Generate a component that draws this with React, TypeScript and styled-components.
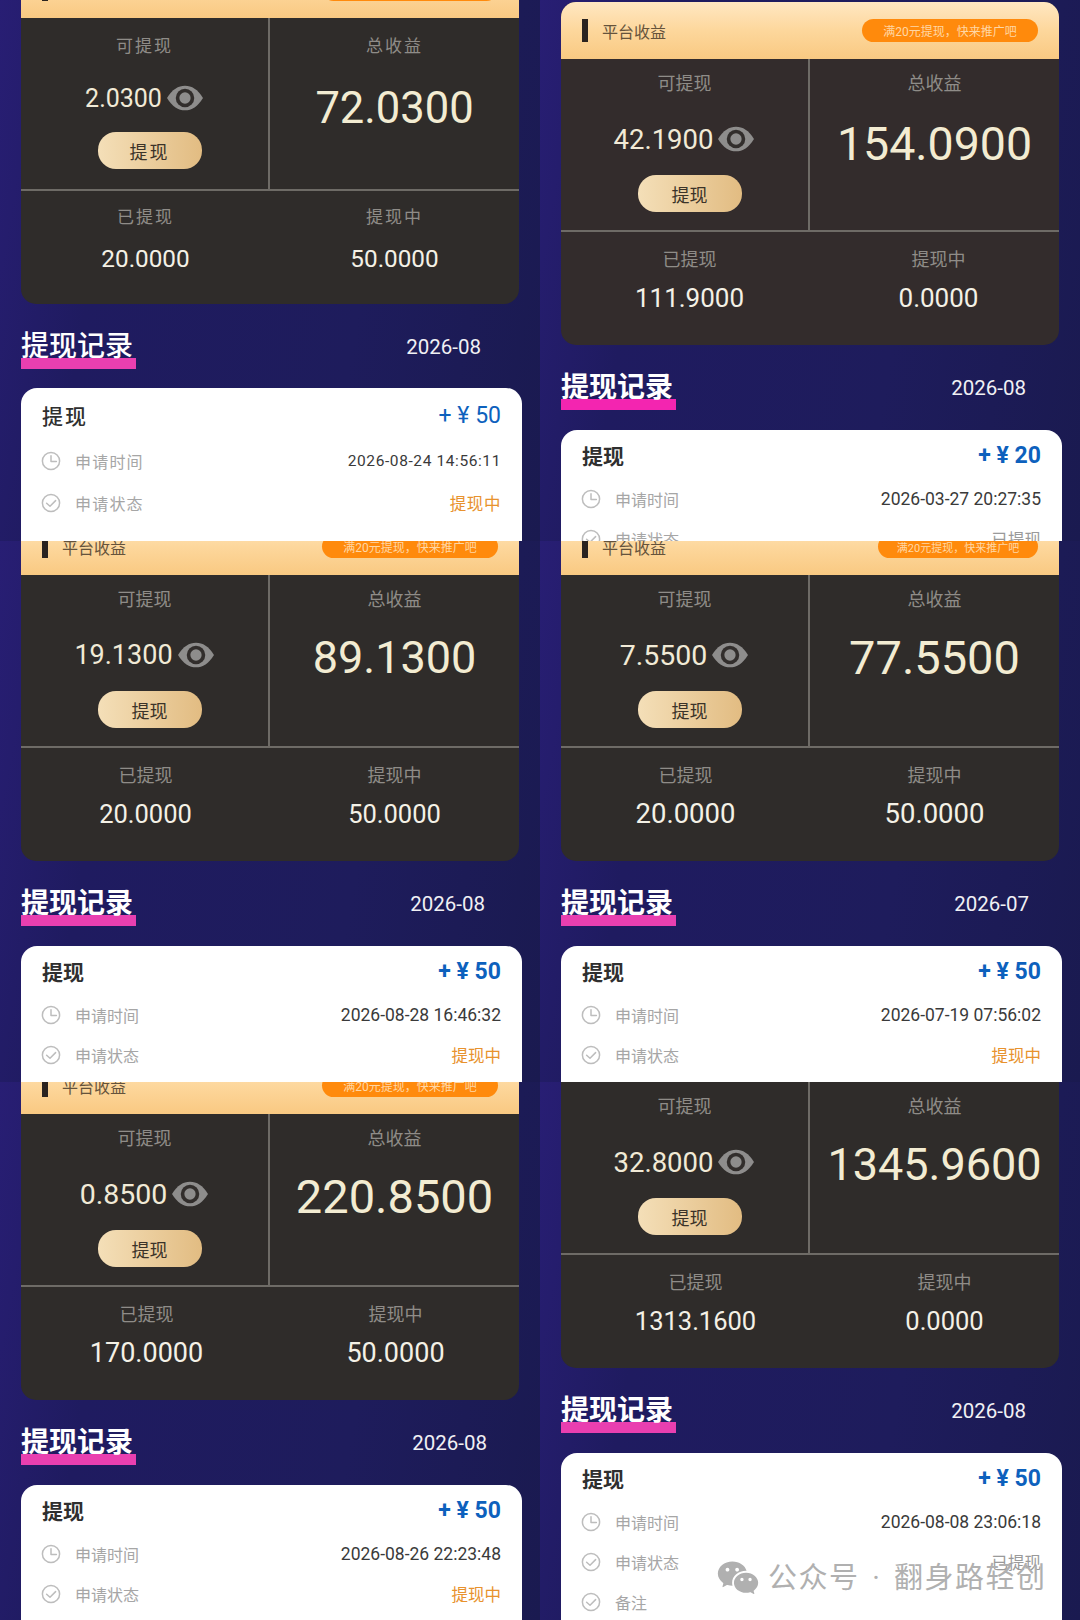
import React from "react";
import styled, { createGlobalStyle } from "styled-components";
import { RiWechatFill } from "react-icons/ri";

const Global = createGlobalStyle`
  html, body { margin: 0; padding: 0; background: #1d1b58; }
  * { box-sizing: border-box; }
  body { font-family: Roboto, "Noto Sans CJK SC", sans-serif; }
`;

const Page = styled.div`
  position: relative;
  width: 1080px;
  height: 1620px;
  overflow: hidden;
  display: grid;
  grid-template-columns: 540px 540px;
  grid-template-rows: 541px 541px 538px;
`;

const Tile = styled.section`
  overflow: hidden;
  background: linear-gradient(100deg, #281e74 0%, #1f1b60 22%, #1e1c5c 65%, #1a1a50 100%);
`;

const Screen = styled.div<{ $top: number }>`
  margin-top: ${(p) => p.$top}px;
`;

const Panel = styled.div<{ $warm?: boolean }>`
  margin: 0 21px;
  width: 498px;
  border-radius: 15px;
  overflow: hidden;
  background: ${(p) => (p.$warm ? "#332c2c" : "#2f2c2a")};
`;

const PanelHead = styled.header`
  height: 57px;
  padding: 0 21px;
  display: flex;
  align-items: center;
  background: linear-gradient(180deg, #ffe7c2 0%, #fdd79c 50%, #f9c982 100%);
`;

const Bar = styled.i`
  width: 6px;
  height: 23px;
  background: #2a2320;
`;

const PanelTitle = styled.span`
  margin-left: 14px;
  font-size: 16px;
  color: #65533c;
`;

const Pill = styled.span<{ $narrow?: boolean }>`
  margin-left: auto;
  width: ${(p) => (p.$narrow ? 160 : 176)}px;
  height: 23px;
  border-radius: 12px;
  background: #ff8a0c;
  color: #ffd7a5;
  font-size: ${(p) => (p.$narrow ? 11 : 12)}px;
  white-space: nowrap;
  display: flex;
  align-items: center;
  justify-content: center;
`;

const TopRow = styled.div`
  display: grid;
  grid-template-columns: 249px 249px;
  height: 173px;
  border-bottom: 2px solid #6e6b66;
`;

const TopCell = styled.div<{ $right?: boolean; $loose?: boolean }>`
  padding-top: ${(p) => (p.$loose ? 17 : 14)}px;
  display: flex;
  flex-direction: column;
  align-items: center;
  ${(p) => (p.$right ? "" : "border-right: 2px solid #6e6b66;")}
`;

const Label = styled.div<{ $wide?: boolean }>`
  height: 22px;
  line-height: 22px;
  font-size: ${(p) => (p.$wide ? 17 : 18)}px;
  letter-spacing: ${(p) => (p.$wide ? 2 : 0)}px;
  color: #8f8c88;
`;

const ValueLine = styled.div<{ $loose?: boolean }>`
  margin-top: ${(p) => (p.$loose ? 21 : 24)}px;
  height: 40px;
  display: flex;
  align-items: center;
  gap: 4px;
`;

const Value = styled.span<{ $size: number }>`
  font-size: ${(p) => p.$size}px;
  color: #f1ead6;
`;

const Withdraw = styled.div<{ $wide?: boolean }>`
  margin: ${(p) => (p.$wide ? 14 : 16)}px 0 0 10px;
  width: 104px;
  height: 37px;
  border-radius: 18px;
  background: linear-gradient(90deg, #f4dfb8 0%, #e2bc82 100%);
  color: #3b3329;
  font-size: 18px;
  letter-spacing: ${(p) => (p.$wide ? 2 : 0)}px;
  display: flex;
  align-items: center;
  justify-content: center;
`;

const BigValue = styled.div<{ $size: number; $gap: number }>`
  margin-top: ${(p) => p.$gap}px;
  height: 56px;
  line-height: 56px;
  font-size: ${(p) => p.$size}px;
  color: #f3ecd2;
`;

const BottomRow = styled.div<{ $shift: number }>`
  display: grid;
  grid-template-columns: 249px 249px;
  height: 113px;
  padding-left: ${(p) => p.$shift}px;
`;

const BottomCell = styled.div<{ $loose?: boolean }>`
  padding-top: ${(p) => (p.$loose ? 15 : 17)}px;
  display: flex;
  flex-direction: column;
  align-items: center;
`;

const BottomValue = styled.div<{ $size: number; $loose?: boolean }>`
  margin-top: ${(p) => (p.$loose ? 11 : 7)}px;
  height: 40px;
  line-height: 40px;
  font-size: ${(p) => p.$size}px;
  color: #f4f1e6;
`;

const Heading = styled.div<{ $loose?: boolean; $end: number }>`
  margin: 26px ${(p) => p.$end}px ${(p) => (p.$loose ? 19 : 20)}px 21px;
  display: flex;
  align-items: flex-start;
  justify-content: space-between;
`;

const HeadingText = styled.h2<{ $light?: boolean; $pink: string }>`
  margin: 0;
  width: 115px;
  height: 39px;
  line-height: 34px;
  font-size: 28px;
  font-weight: ${(p) => (p.$light ? 500 : 700)};
  color: #fff;
  white-space: nowrap;
  background: linear-gradient(${(p) => p.$pink}, ${(p) => p.$pink}) bottom / 100% 11px no-repeat;
`;

const Month = styled.span<{ $size: number }>`
  line-height: 34px;
  font-size: ${(p) => p.$size}px;
  color: #f0f0f4;
`;

const Record = styled.div<{ $loose?: boolean }>`
  margin: 0 18px 0 21px;
  padding: ${(p) => (p.$loose ? 11 : 9)}px 21px 0;
  min-height: 220px;
  border-radius: 16px;
  background: #fff;
`;

const RecordHead = styled.div<{ $loose?: boolean }>`
  height: 32px;
  display: flex;
  align-items: center;
  justify-content: space-between;
  margin-bottom: ${(p) => (p.$loose ? 9 : 8)}px;
`;

const RecordTitle = styled.span<{ $light?: boolean }>`
  font-size: 21px;
  font-weight: ${(p) => (p.$light ? 500 : 700)};
  letter-spacing: ${(p) => (p.$light ? 2 : 0)}px;
  color: #2f2f2f;
`;

const Amount = styled.span<{ $light?: boolean }>`
  font-size: 23px;
  font-weight: ${(p) => (p.$light ? 400 : 700)};
  color: #0d61bd;
`;

const Row = styled.div<{ $loose?: boolean }>`
  height: ${(p) => (p.$loose ? 42 : 40)}px;
  display: flex;
  align-items: center;
`;

const RowIcon = styled.svg`
  width: 20px;
  height: 20px;
  margin-left: -1px;
  flex: none;
  fill: none;
  stroke: #bdbdbd;
  stroke-width: 1.5;
  stroke-linecap: round;
  stroke-linejoin: round;
`;

const RowLabel = styled.span<{ $wide?: boolean }>`
  margin-left: 14px;
  font-size: 16px;
  letter-spacing: ${(p) => (p.$wide ? 1.2 : 0)}px;
  color: #a6a6a6;
`;

const RowValue = styled.span<{ $tone: string; $size: number; $wide?: boolean }>`
  margin-left: auto;
  font-size: ${(p) => p.$size}px;
  letter-spacing: ${(p) => (p.$wide ? 0.6 : 0)}px;
  color: ${(p) => p.$tone};
`;

const Watermark = styled.div`
  position: absolute;
  left: 716px;
  top: 1556px;
  display: flex;
  align-items: center;
  gap: 8px;
  color: #b0b0b0;
  font-size: 29px;
  letter-spacing: 1.5px;
  word-spacing: 4px;
  line-height: 42px;
  white-space: nowrap;
`;

const EyeSvg = styled.svg`
  width: 38px;
  height: 28px;
  flex: none;
`;

const Eye = () => (
  <EyeSvg viewBox="0 0 37 27">
    <path d="M1 13.5C6 5 12 1.5 18.5 1.5S31 5 36 13.5C31 22 25 25.5 18.5 25.5S6 22 1 13.5Z" fill="#8e8d8c" />
    <circle cx="18.5" cy="13.5" r="9" fill="#322e2c" />
    <circle cx="18.5" cy="13.5" r="5.5" fill="#8e8d8c" />
  </EyeSvg>
);

const Clock = () => (
  <RowIcon viewBox="0 0 20 20">
    <circle cx="10" cy="10" r="8.6" />
    <path d="M10 4.8V10.6H15.4" />
  </RowIcon>
);

const Check = () => (
  <RowIcon viewBox="0 0 20 20">
    <circle cx="10" cy="10" r="8.6" />
    <path d="M5.6 10.2L9 13.2L14.6 7.6" />
  </RowIcon>
);

type Data = {
  top: number;
  avail: string;
  availSize: number;
  total: string;
  totalSize: number;
  totalGap?: number;
  paid: string;
  pending: string;
  paidSize: number;
  shift?: number;
  month: string;
  end: number;
  amount: string;
  time: string;
  status: string;
  statusTone: string;
  note?: boolean;
  loose?: boolean;
  narrowPill?: boolean;
  warm?: boolean;
  pink?: string;
};

const ORANGE = "#e8922e";
const GREY = "#9a9a9a";

const tiles: Data[] = [
  { top: -39, avail: "2.0300", availSize: 25, total: "72.0300", totalSize: 43.5, totalGap: 24, paid: "20.0000", pending: "50.0000", paidSize: 24.3, month: "2026-08", end: 59, amount: "+ ¥ 50", time: "2026-08-24  14:56:11", status: "提现中", statusTone: ORANGE, loose: true },
  { top: 2, avail: "42.1900", availSize: 27.5, total: "154.0900", totalSize: 46.5, totalGap: 21, paid: "111.9000", pending: "0.0000", paidSize: 26, shift: 4, month: "2026-08", end: 54, amount: "+ ¥ 20", time: "2026-03-27 20:27:35", status: "已提现", statusTone: GREY, warm: true, pink: "#f325b0" },
  { top: -23, avail: "19.1300", availSize: 27, total: "89.1300", totalSize: 45, paid: "20.0000", pending: "50.0000", paidSize: 25.5, month: "2026-08", end: 55, amount: "+ ¥ 50", time: "2026-08-28 16:46:32", status: "提现中", statusTone: ORANGE },
  { top: -23, avail: "7.5500", availSize: 28.5, total: "77.5500", totalSize: 47, paid: "20.0000", pending: "50.0000", paidSize: 27.5, month: "2026-07", end: 51, amount: "+ ¥ 50", time: "2026-07-19 07:56:02", status: "提现中", statusTone: ORANGE, narrowPill: true },
  { top: -25, avail: "0.8500", availSize: 28.5, total: "220.8500", totalSize: 47, paid: "170.0000", pending: "50.0000", paidSize: 27, shift: 1, month: "2026-08", end: 53, amount: "+ ¥ 50", time: "2026-08-26 22:23:48", status: "提现中", statusTone: ORANGE },
  { top: -57, avail: "32.8000", availSize: 27.5, total: "1345.9600", totalSize: 45, paid: "1313.1600", pending: "0.0000", paidSize: 25.5, shift: 10, month: "2026-08", end: 54, amount: "+ ¥ 50", time: "2026-08-08 23:06:18", status: "已提现", statusTone: GREY, note: true },
];

const Card = ({ d }: { d: Data }) => (
  <Tile>
    <Screen $top={d.top}>
      <Panel $warm={d.warm}>
        <PanelHead>
          <Bar />
          <PanelTitle>平台收益</PanelTitle>
          <Pill $narrow={d.narrowPill}>满20元提现，快来推广吧</Pill>
        </PanelHead>
        <TopRow>
          <TopCell $loose={d.loose}>
            <Label $wide={d.loose}>可提现</Label>
            <ValueLine $loose={d.loose}>
              <Value $size={d.availSize}>{d.avail}</Value>
              <Eye />
            </ValueLine>
            <Withdraw $wide={d.loose}>提现</Withdraw>
          </TopCell>
          <TopCell $right $loose={d.loose}>
            <Label $wide={d.loose}>总收益</Label>
            <BigValue $size={d.totalSize} $gap={d.totalGap ?? 19}>{d.total}</BigValue>
          </TopCell>
        </TopRow>
        <BottomRow $shift={d.shift ?? 0}>
          <BottomCell $loose={d.loose}>
            <Label $wide={d.loose}>已提现</Label>
            <BottomValue $size={d.paidSize} $loose={d.loose}>{d.paid}</BottomValue>
          </BottomCell>
          <BottomCell $loose={d.loose}>
            <Label $wide={d.loose}>提现中</Label>
            <BottomValue $size={d.paidSize} $loose={d.loose}>{d.pending}</BottomValue>
          </BottomCell>
        </BottomRow>
      </Panel>
      <Heading $loose={d.loose} $end={d.end}>
        <HeadingText $light={d.loose} $pink={d.pink ?? "#e93fb0"}>提现记录</HeadingText>
        <Month $size={20.5}>{d.month}</Month>
      </Heading>
      <Record $loose={d.loose}>
        <RecordHead $loose={d.loose}>
          <RecordTitle $light={d.loose}>提现</RecordTitle>
          <Amount $light={d.loose}>{d.amount}</Amount>
        </RecordHead>
        <Row $loose={d.loose}>
          <Clock />
          <RowLabel $wide={d.loose}>申请时间</RowLabel>
          <RowValue $tone="#3a3a3a" $size={d.loose ? 15.5 : 17.5} $wide={d.loose}>{d.time}</RowValue>
        </Row>
        <Row $loose={d.loose}>
          <Check />
          <RowLabel $wide={d.loose}>申请状态</RowLabel>
          <RowValue $tone={d.statusTone} $size={16.5} $wide={d.loose}>{d.status}</RowValue>
        </Row>
        {d.note && (
          <Row>
            <Check />
            <RowLabel>备注</RowLabel>
          </Row>
        )}
      </Record>
    </Screen>
  </Tile>
);

export default function App() {
  return (
    <Page>
      <Global />
      {tiles.map((d) => (
        <Card key={d.total} d={d} />
      ))}
      <Watermark>
        <RiWechatFill size={44} />
        <span>公众号 · 翻身路轻创</span>
      </Watermark>
    </Page>
  );
}
